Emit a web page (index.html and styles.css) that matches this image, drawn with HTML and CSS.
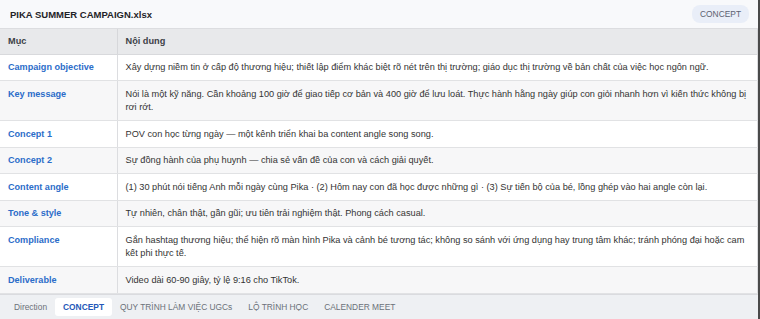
FILE: index.html
```html
<!DOCTYPE html>
<html lang="vi">
<head>
<meta charset="utf-8">
<link rel="stylesheet" href="styles.css">
</head>
<body>
<div class="sheet">
  <header class="topbar">
    <div class="title">PIKA SUMMER CAMPAIGN.xlsx</div>
    <div class="badge">CONCEPT</div>
  </header>
  <table class="grid">
    <thead>
      <tr><th class="c1">Mục</th><th>Nội dung</th></tr>
    </thead>
    <tbody>
      <tr><td class="k">Campaign objective</td><td>Xây dựng niềm tin ở cấp độ thương hiệu; thiết lập điểm khác biệt rõ nét trên thị trường; giáo dục thị trường về bản chất của việc học ngôn ngữ.</td></tr>
      <tr><td class="k">Key message</td><td>Nói là một kỹ năng. Cần khoảng 100 giờ để giao tiếp cơ bản và 400 giờ để lưu loát. Thực hành hằng ngày giúp con giỏi nhanh hơn vì kiến thức không bị rơi rớt.</td></tr>
      <tr><td class="k">Concept 1</td><td>POV con học từng ngày — một kênh triển khai ba content angle song song.</td></tr>
      <tr><td class="k">Concept 2</td><td>Sự đồng hành của phụ huynh — chia sẻ vấn đề của con và cách giải quyết.</td></tr>
      <tr><td class="k">Content angle</td><td>(1) 30 phút nói tiếng Anh mỗi ngày cùng Pika · (2) Hôm nay con đã học được những gì · (3) Sự tiến bộ của bé, lồng ghép vào hai angle còn lại.</td></tr>
      <tr><td class="k">Tone &amp; style</td><td>Tự nhiên, chân thật, gần gũi; ưu tiên trải nghiệm thật. Phong cách casual.</td></tr>
      <tr><td class="k">Compliance</td><td>Gắn hashtag thương hiệu; thể hiện rõ màn hình Pika và cảnh bé tương tác; không so sánh với ứng dụng hay trung tâm khác; tránh phóng đại hoặc cam kết phi thực tế.</td></tr>
      <tr><td class="k">Deliverable</td><td>Video dài 60-90 giây, tỷ lệ 9:16 cho TikTok.</td></tr>
    </tbody>
  </table>
  <nav class="tabs">
    <span class="tab">Direction</span>
    <span class="tab active">CONCEPT</span>
    <span class="tab">QUY TRÌNH LÀM VIỆC UGCs</span>
    <span class="tab">LỘ TRÌNH HỌC</span>
    <span class="tab">CALENDER MEET</span>
  </nav>
</div>
</body>
</html>
```

FILE: styles.css
```css
* { box-sizing: border-box; }
html, body { margin: 0; padding: 0; background: #fff; }
body {
  font-family: "Liberation Sans", Arial, sans-serif;
  color: #333;
  width: 760px;
  height: 319px;
  overflow: hidden;
}
.sheet {
  width: 760px;
  height: 319px;
  border-right: 2px solid #4a4a4a;
  display: flex;
  flex-direction: column;
}
.topbar {
  height: 29px;
  flex: none;
  display: flex;
  align-items: center;
  justify-content: space-between;
  padding: 0 10px 0 10px;
  background: #f8f9fb;
  border-bottom: 1px solid #dcdde0;
}
.title {
  font-size: 9.5px;
  font-weight: bold;
  color: #1f2328;
}
.badge {
  font-size: 8.4px;
  color: #5b6170;
  background: #e9eef8;
  border-radius: 8px;
  padding: 4px 8px;
  margin-right: -1px;
}
.grid {
  width: 100%;
  border-collapse: collapse;
  font-size: 9.2px;
  line-height: 13.5px;
}
.grid th {
  text-align: left;
  background: #e8e9eb;
  color: #3d4147;
  font-weight: bold;
  font-size: 9.2px;
  line-height: 13px;
  padding: 6px 8px;
  border-bottom: 1px solid #d8d9dc;
  border-right: 1px solid #d6d7da;
}
.grid th.c1, .grid td.k { width: 117px; }
.grid td {
  padding: 6.2px 8px 5.8px;
  vertical-align: top;
  border-bottom: 1px solid #e1e2e4;
  border-right: 1px solid #dcdde0;
  color: #333;
}
.grid tbody tr:nth-child(even) td { background: #f7f7f8; }
.grid td.k {
  color: #2b6cc9;
  font-weight: bold;
  font-size: 9.1px;
}
.tabs {
  flex: 1;
  display: flex;
  align-items: center;
  padding: 0 5px 0 6px;
  background: #eef0f3;
  border-top: 1px solid #dadbdf;
}
.tab {
  font-size: 8.4px;
  color: #6b7079;
  padding: 4px 8px;
  border-radius: 3px;
}
.tab.active {
  background: #fff;
  color: #2458b8;
  font-weight: bold;
}
```
